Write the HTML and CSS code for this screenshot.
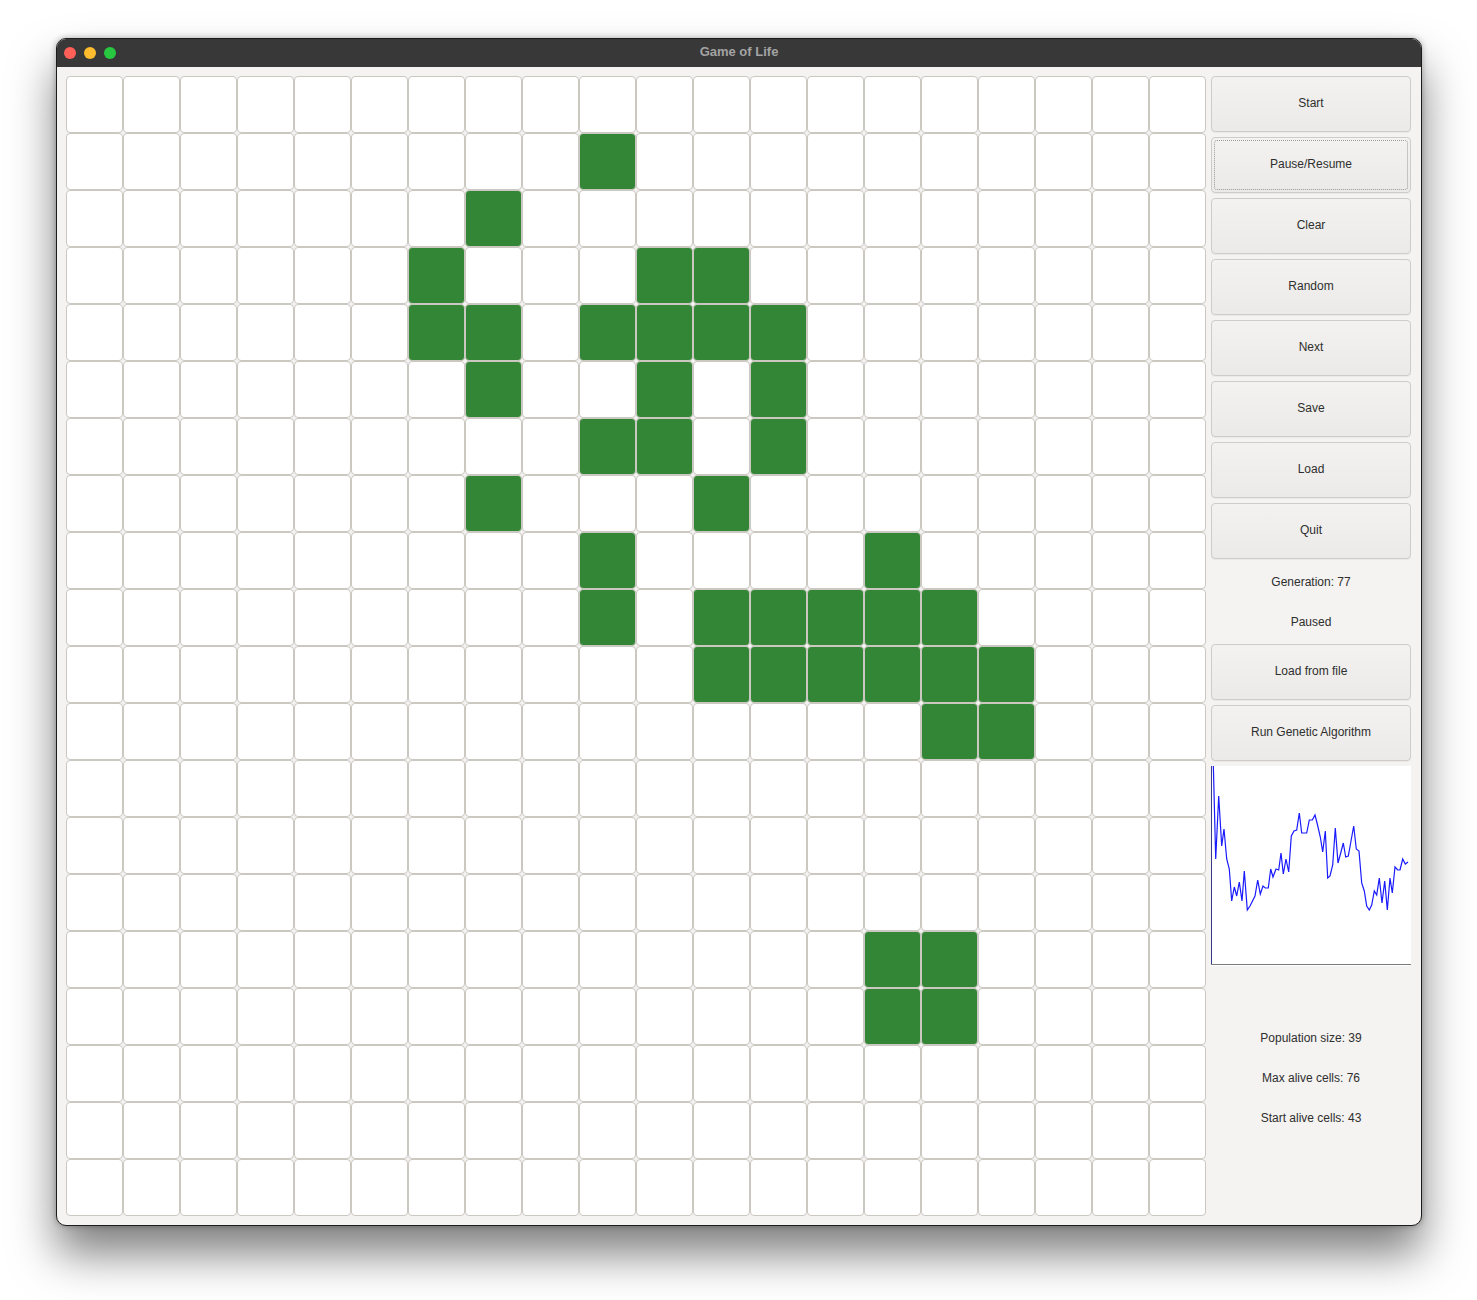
FILE: index.html
```html
<!DOCTYPE html>
<html>
<head>
<meta charset="utf-8">
<title>Game of Life</title>
<link rel="stylesheet" href="styles.css">
</head>
<body>
<div class="stage">
  <div class="window">
    <div class="titlebar">
      <div class="lights">
        <span class="light red"></span>
        <span class="light yellow"></span>
        <span class="light green"></span>
      </div>
      <div class="title">Game of Life</div>
    </div>
    <div class="content">
      <div class="grid" id="grid"></div>
      <div class="sidebar">
        <button class="btn">Start</button>
        <button class="btn focused"><span class="focus">Pause/Resume</span></button>
        <button class="btn">Clear</button>
        <button class="btn">Random</button>
        <button class="btn">Next</button>
        <button class="btn">Save</button>
        <button class="btn">Load</button>
        <button class="btn">Quit</button>
        <div class="label">Generation: 77</div>
        <div class="label">Paused</div>
        <button class="btn">Load from file</button>
        <button class="btn">Run Genetic Algorithm</button>
        <div class="chart">
          <svg width="200" height="200" viewBox="0 0 200 200">
            <line x1="0.5" y1="0" x2="0.5" y2="199" stroke="#3a3a8a" stroke-width="1"/>
            <line x1="0" y1="198.5" x2="200" y2="198.5" stroke="#7a7a7a" stroke-width="1"/>
            <polyline fill="none" stroke="#1a1aff" stroke-width="1.2" stroke-linejoin="miter"
              points="2.3,-2 4.7,93 7.7,30 10.7,80 13,63 15.7,93 18.3,103 20.7,135 23.3,121 25.7,130 28.3,116 31,135 33.3,105 36.3,144 39,140 44,130 46.7,114 49.3,128 52,120 54.3,122 57.3,122 59.7,103 62,111 65,103 67.7,104 70,87 72.3,108 75,93 77.7,106 80.3,70 83,65 85.7,64 88.3,47 90.7,67 95.7,67 98.3,54 101.3,54 104,49 106.3,58 109.3,71 111.7,86 114.3,65 116.7,112 119,110 121.7,99 124.3,62 127,97 129.7,87 132.3,77 134.7,91 137.3,90 140,75 142.7,60 145.3,83 148,85 150.7,117 153.3,125 155.7,140 158.3,144 160.7,139 163.3,125 165.7,129 168.3,112 171,137 173.7,115 176.3,144 179,112 181.3,127 184,101 186.7,104 189,104 191.7,93 194.3,98 197,96"/>
          </svg>
        </div>
        <div class="spacer"></div>
        <div class="label">Population size: 39</div>
        <div class="label">Max alive cells: 76</div>
        <div class="label">Start alive cells: 43</div>
      </div>
    </div>
  </div>
</div>
<script src="script.js"></script>
</body>
</html>
```

FILE: script.js
```js
(function () {
  var alive = {
    1: [9],
    2: [7],
    3: [6, 10, 11],
    4: [6, 7, 9, 10, 11, 12],
    5: [7, 10, 12],
    6: [9, 10, 12],
    7: [7, 11],
    8: [9, 14],
    9: [9, 11, 12, 13, 14, 15],
    10: [11, 12, 13, 14, 15, 16],
    11: [15, 16],
    15: [14, 15],
    16: [14, 15]
  };
  var grid = document.getElementById('grid');
  for (var r = 0; r < 20; r++) {
    for (var c = 0; c < 20; c++) {
      var d = document.createElement('div');
      d.className = 'cell';
      if (alive[r] && alive[r].indexOf(c) !== -1) d.className += ' alive';
      grid.appendChild(d);
    }
  }
})();
```

FILE: styles.css
```css
html, body {
  margin: 0;
  padding: 0;
  background: #ffffff;
}

.stage {
  padding: 38px 0 80px 56px;
}

.window {
  width: 1364px;
  height: 1186px;
  border: 1px solid #1c1c1c;
  border-radius: 10px;
  overflow: hidden;
  background: #f4f3f1;
  box-shadow: 0 28px 45px rgba(0, 0, 0, 0.5), 0 0 6px rgba(0, 0, 0, 0.3);
  display: flex;
  flex-direction: column;
}

.titlebar {
  height: 28px;
  background: #383838;
  display: flex;
  align-items: center;
  position: relative;
  flex-shrink: 0;
}

.lights {
  display: flex;
  gap: 8px;
  padding-left: 7px;
}

.light {
  width: 12px;
  height: 12px;
  border-radius: 50%;
  display: block;
}

.light.red { background: #fe5f57; }
.light.yellow { background: #febc2e; }
.light.green { background: #28c840; }

.title {
  position: absolute;
  left: 0;
  right: 0;
  top: 0;
  line-height: 26px;
  text-align: center;
  font-family: "Liberation Sans", Arial, sans-serif;
  font-weight: bold;
  font-size: 13px;
  color: #a3a3a3;
}

.content {
  display: flex;
  gap: 5px;
  padding: 9px 0 0 9px;
}

.grid {
  display: grid;
  grid-template-columns: repeat(20, 57px);
  grid-template-rows: repeat(20, 57px);
}

.cell {
  box-sizing: border-box;
  border: 1px solid #cbc7c1;
  border-radius: 4px;
  background: #ffffff;
}

.cell.alive {
  background: #348637;
}

.sidebar {
  width: 200px;
  display: flex;
  flex-direction: column;
  gap: 5px;
}

.btn {
  box-sizing: border-box;
  height: 56px;
  margin: 0;
  border: 1px solid #cfcbc6;
  border-radius: 4px;
  background: linear-gradient(#f3f2f0, #ebeae8);
  font-family: "Liberation Sans", Arial, sans-serif;
  font-size: 12px;
  color: #2e2e2e;
  padding: 0 0 2px 0;
  display: flex;
  align-items: center;
  justify-content: center;
  box-shadow: 0 1px 0 rgba(0, 0, 0, 0.04);
}

.btn.focused {
  padding: 2px;
}

.focus {
  flex: 1;
  align-self: stretch;
  display: flex;
  align-items: center;
  justify-content: center;
  padding-bottom: 2px;
  border: 1px dotted #9a9a9a;
  border-radius: 3px;
}

.label {
  height: 35px;
  display: flex;
  align-items: center;
  justify-content: center;
  font-family: "Liberation Sans", Arial, sans-serif;
  font-size: 12px;
  color: #2e2e2e;
}

.chart {
  height: 200px;
  background: #ffffff;
}

.chart svg {
  display: block;
  overflow: hidden;
}

.spacer {
  height: 44px;
}
```
